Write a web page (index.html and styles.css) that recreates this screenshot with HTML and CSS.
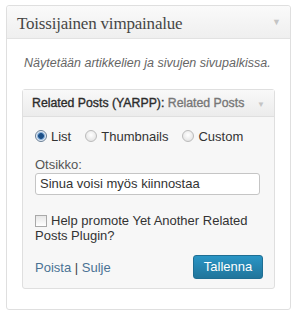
FILE: index.html
```html
<!DOCTYPE html>
<html>
<head>
<meta charset="utf-8">
<link rel="stylesheet" href="styles.css">
</head>
<body>
<div class="sidebar">
  <div class="sidebar-head">
    <h3 class="sidebar-title">Toissijainen vimpainalue</h3>
    <span class="arrow">&#9660;</span>
  </div>
  <div class="sidebar-body">
    <p class="desc">Näytetään artikkelien ja sivujen sivupalkissa.</p>
    <div class="widget">
      <div class="widget-head">
        <h4 class="widget-title">Related Posts (YARPP):<span class="instance"> Related Posts</span></h4>
        <span class="arrow small">&#9660;</span>
      </div>
      <div class="widget-body">
        <div class="radios">
          <label class="opt"><span class="radio on"></span>List</label>
          <label class="opt"><span class="radio"></span>Thumbnails</label>
          <label class="opt"><span class="radio"></span>Custom</label>
        </div>
        <div class="field-label">Otsikko:</div>
        <div class="input">Sinua voisi myös kiinnostaa</div>
        <div class="check-row"><span class="checkbox"></span>Help promote Yet Another Related Posts Plugin?</div>
        <div class="actions">
          <div class="links"><span class="link">Poista</span> | <span class="link">Sulje</span></div>
          <span class="button">Tallenna</span>
        </div>
      </div>
    </div>
  </div>
</div>
</body>
</html>
```
FILE: styles.css
```css
html, body { margin: 0; padding: 0; background: #fff; }
body { padding: 5px 7px 0 6px; font-family: "Liberation Sans", Arial, sans-serif; font-size: 13px; color: #333; }
.sidebar { border: 1px solid #dfdfdf; border-radius: 3px; width: 283px; height: 303px; box-sizing: content-box; }
.sidebar-head { height: 32px; display: flex; align-items: center; justify-content: space-between; padding: 0 9px 0 10px; background: linear-gradient(#fafafa, #efefef); border-bottom: 1px solid #e2e2e2; border-radius: 3px 3px 0 0; }
.sidebar-title { margin: 3px 0 0 0; font-family: "Liberation Serif", "Times New Roman", serif; font-weight: normal; font-size: 17px; letter-spacing: -0.2px; color: #464646; }
.arrow { color: #c4c4c4; font-size: 9px; }
.arrow.small { font-size: 8px; margin-top: 2px; }
.sidebar-body { padding: 0 15px 0 15px; }
.desc { margin: 17px 0 19px 2px; font-style: italic; color: #666; font-size: 12.5px; }
.widget { border: 1px solid #dfdfdf; border-radius: 3px; background: #f7f7f7; }
.widget-head { height: 26px; display: flex; align-items: center; justify-content: space-between; padding: 0 9px 0 9px; background: linear-gradient(#f9f9f9, #ececec); border-bottom: 1px solid #dfdfdf; }
.widget-title { margin: 0; font-size: 12.3px; font-weight: normal; color: #2b2b2b; -webkit-text-stroke: 0.35px #2b2b2b; white-space: nowrap; }
.instance { color: #777; -webkit-text-stroke: 0.35px #777; }
.widget-body { padding: 9px 11px 9px 12px; }
.radios { display: flex; align-items: center; height: 20px; }
.opt { display: flex; align-items: center; margin-right: 14px; color: #333; }
.radio { width: 12px; height: 12px; border-radius: 50%; border: 1px solid #bbb; background: radial-gradient(circle at 50% 40%, #fff, #ddd); margin-right: 4px; box-sizing: border-box; }
.radio.on { border-color: #6a7f95; background: radial-gradient(circle, #1c4f86 0 2.5px, #5b8fc4 3px, #e4edf7 4.5px); }
.field-label { margin-top: 12px; color: #555; line-height: 14px; }
.input { margin-top: 1px; height: 22px; border: 1px solid #c5c5c5; border-radius: 3px; background: #fff; box-sizing: border-box; width: 225px; padding: 0 4px; line-height: 20px; color: #333; }
.check-row { margin-top: 18px; line-height: 15px; color: #333; width: 215px; }
.checkbox { display: inline-block; width: 12px; height: 12px; border: 1px solid #a9a9a9; background: linear-gradient(#e6e6e6, #fff); vertical-align: -2px; margin-right: 4px; box-sizing: border-box; }
.actions { display: flex; justify-content: space-between; align-items: center; margin-top: 12px; }
.links { color: #444; }
.link { color: #4a7294; }
.button { display: inline-block; height: 24px; line-height: 22px; box-sizing: border-box; width: 70px; text-align: center; color: #fff; background: linear-gradient(#2a95c5, #21759b); border: 1px solid #1f6e93; border-radius: 3px; font-size: 13px; }
```
